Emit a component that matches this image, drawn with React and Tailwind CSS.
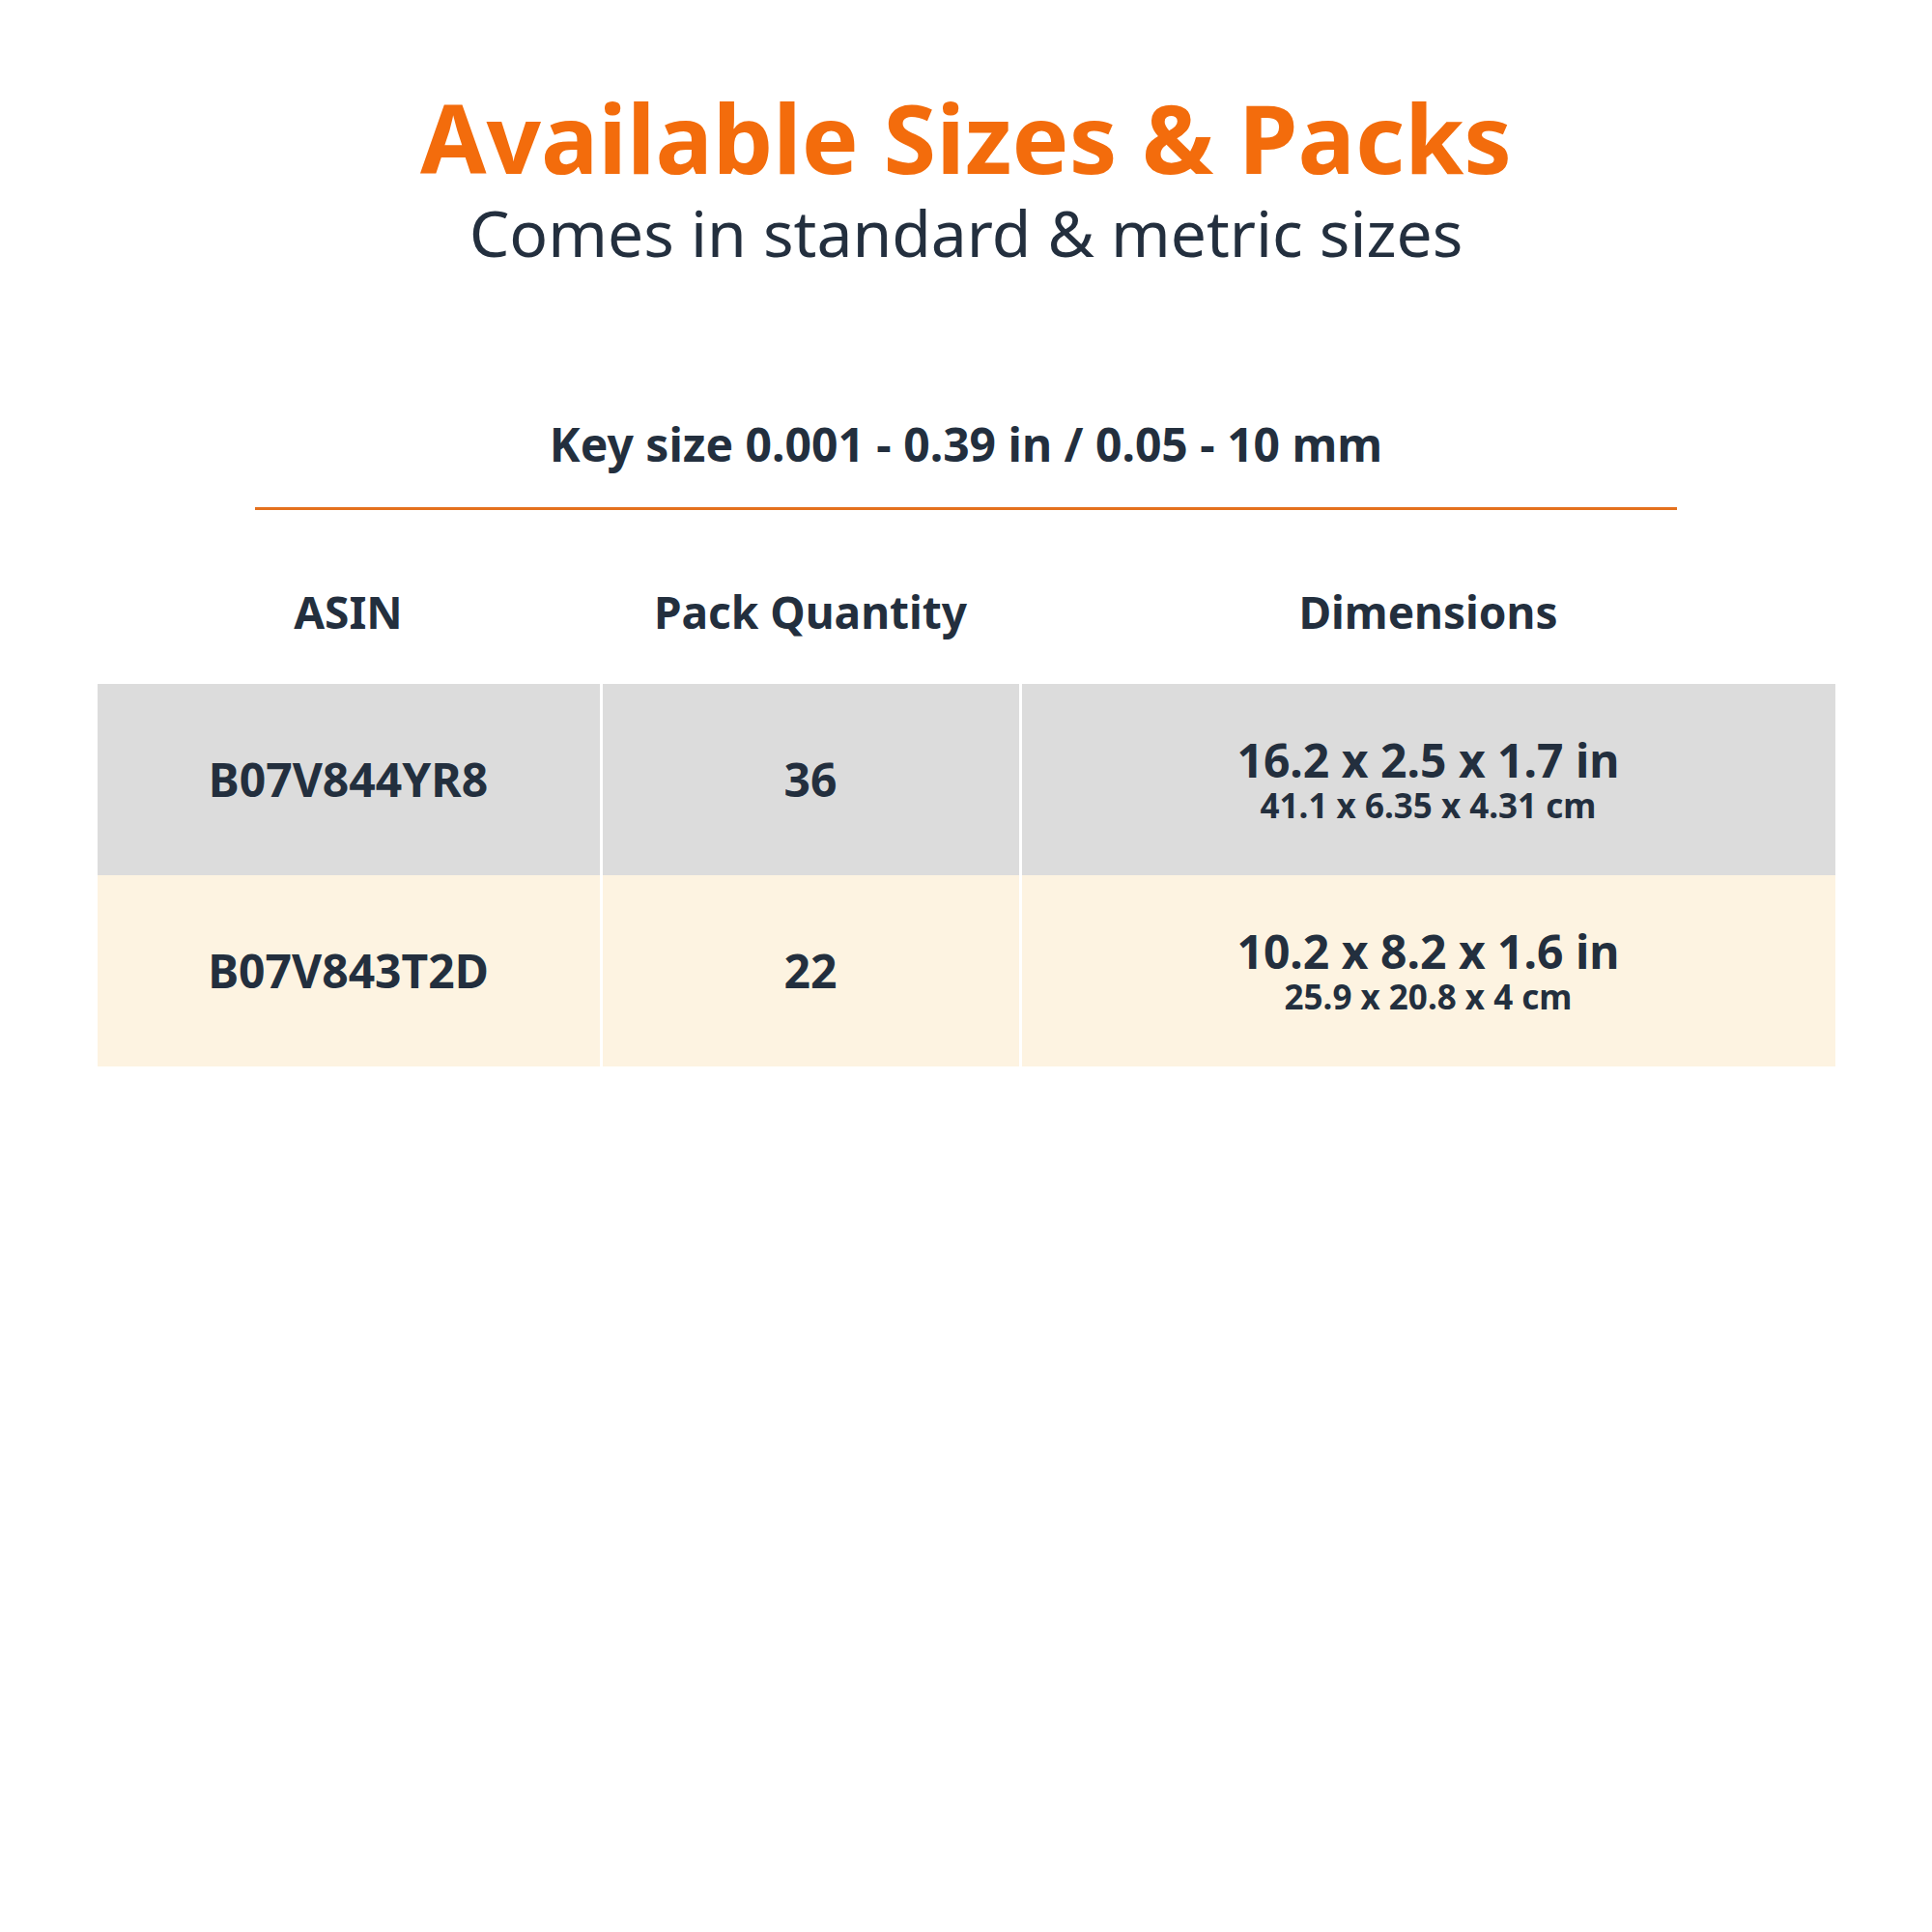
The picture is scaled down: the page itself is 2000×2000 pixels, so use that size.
import React from 'react';

const rows = [
  { asin: 'B07V844YR8', qty: '36', inch: '16.2 x 2.5 x 1.7 in', cm: '41.1 x 6.35 x 4.31 cm', bg: 'bg-[#dcdcdc]' },
  { asin: 'B07V843T2D', qty: '22', inch: '10.2 x 8.2 x 1.6 in', cm: '25.9 x 20.8 x 4 cm', bg: 'bg-[#fdf3e1]' },
];

const App = () => {
  return (
    <div className="w-[2000px] h-[2000px] bg-white flex flex-col items-center text-[#232f3e] font-['Noto_Sans',sans-serif]">
      {/* Heading */}
      <h1 className="mt-[85px] text-[99px] leading-[1.15] font-bold text-[#f36c0c]">Available Sizes &amp; Packs</h1>
      <p className="mt-[4px] text-[66px] leading-[1.15]">Comes in standard &amp; metric sizes</p>

      {/* Key size */}
      <p className="mt-[157px] text-[48px] leading-none font-bold">Key size 0.001 - 0.39 in / 0.05 - 10 mm</p>
      <div className="mt-[41px] w-[1472px] h-[3px] bg-[#e4711e]" />

      {/* Table */}
      <div className="w-[1799px] mt-[71px]">
        <div className="grid grid-cols-[520px_437px_1fr] h-[109px] text-[46px] font-bold">
          <div className="text-center">ASIN</div>
          <div className="text-center">Pack Quantity</div>
          <div className="text-center">Dimensions</div>
        </div>
        {rows.map((r) => (
          <div key={r.asin} className={`grid grid-cols-[520px_437px_1fr] h-[198px] ${r.bg} font-bold`}>
            <div className="flex items-center justify-center text-[48px]">{r.asin}</div>
            <div className="flex items-center justify-center text-[48px] border-x-[3px] border-white">{r.qty}</div>
            <div className="flex flex-col items-center justify-center">
              <span className="text-[48px] leading-[1.15]">{r.inch}</span>
              <span className="text-[35px] leading-[1.15]">{r.cm}</span>
            </div>
          </div>
        ))}
      </div>
    </div>
  );
};

export default App;
